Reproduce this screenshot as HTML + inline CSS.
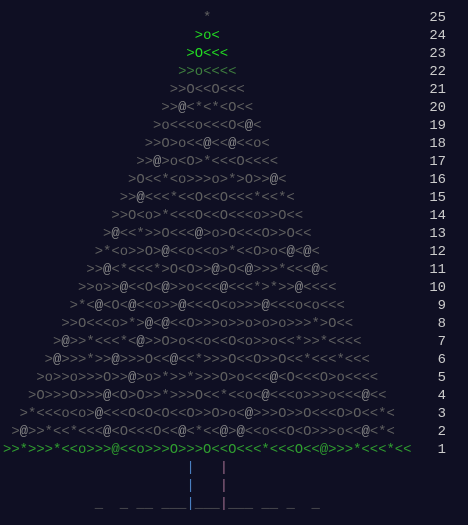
<!DOCTYPE html><html><head><style>
html,body{margin:0;padding:0;background:#0f0f23;width:468px;height:525px;overflow:hidden}
pre{position:absolute;left:3px;top:9px;margin:0;font-family:"Liberation Mono",monospace;font-size:13.9px;line-height:18px;color:#606060;white-space:pre}
.n{position:absolute;right:22px;top:9px;margin:0;font-family:"Liberation Mono",monospace;font-size:13.9px;line-height:18px;color:#cccccc;text-align:right;white-space:pre}
.g1{color:#22dd22}.g2{color:#3f7f3f}.g3{color:#30a030}.a{color:#8a8a8a}.b{color:#4a7fc0}.m{color:#9a6a8a}
</style></head><body>
<pre>                        *
                       <span class="g1">&gt;o&lt;</span>
                      <span class="g1">&gt;O&lt;&lt;&lt;</span>
                     <span class="g2">&gt;&gt;o&lt;&lt;&lt;&lt;</span>
                    &gt;&gt;O&lt;&lt;O&lt;&lt;&lt;
                   &gt;&gt;<span class="a">@</span>&lt;*&lt;*&lt;O&lt;&lt;
                  &gt;o&lt;&lt;&lt;o&lt;&lt;&lt;O&lt;<span class="a">@</span>&lt;
                 &gt;&gt;O&gt;o&lt;&lt;<span class="a">@</span>&lt;&lt;<span class="a">@</span>&lt;&lt;o&lt;
                &gt;&gt;<span class="a">@</span>&gt;o&lt;O&gt;*&lt;&lt;&lt;O&lt;&lt;&lt;&lt;
               &gt;O&lt;&lt;*&lt;o&gt;&gt;&gt;o&gt;*&gt;O&gt;&gt;<span class="a">@</span>&lt;
              &gt;&gt;<span class="a">@</span>&lt;&lt;&lt;*&lt;&lt;O&lt;&lt;O&lt;&lt;&lt;*&lt;&lt;*&lt;
             &gt;&gt;O&lt;o&gt;*&lt;&lt;&lt;O&lt;&lt;O&lt;&lt;&lt;o&gt;&gt;O&lt;&lt;
            &gt;<span class="a">@</span>&lt;&lt;*&gt;&gt;O&lt;&lt;&lt;<span class="a">@</span>&gt;o&gt;O&lt;&lt;&lt;O&gt;&gt;O&lt;&lt;
           &gt;*&lt;o&gt;&gt;O&gt;<span class="a">@</span>&lt;&lt;o&lt;&lt;o&gt;*&lt;&lt;O&gt;o&lt;<span class="a">@</span>&lt;<span class="a">@</span>&lt;
          &gt;&gt;<span class="a">@</span>&lt;*&lt;&lt;&lt;*&gt;O&lt;O&gt;&gt;<span class="a">@</span>&gt;O&lt;<span class="a">@</span>&gt;&gt;&gt;*&lt;&lt;&lt;<span class="a">@</span>&lt;
         &gt;&gt;o&gt;&gt;<span class="a">@</span>&lt;&lt;O&lt;<span class="a">@</span>&gt;&gt;o&lt;&lt;&lt;<span class="a">@</span>&lt;&lt;&lt;*&gt;*&gt;&gt;<span class="a">@</span>&lt;&lt;&lt;&lt;
        &gt;*&lt;<span class="a">@</span>&lt;O&lt;<span class="a">@</span>&lt;&lt;o&gt;&gt;<span class="a">@</span>&lt;&lt;&lt;O&lt;o&gt;&gt;&gt;<span class="a">@</span>&lt;&lt;&lt;o&lt;o&lt;&lt;&lt;
       &gt;&gt;O&lt;&lt;&lt;o&gt;*&gt;<span class="a">@</span>&lt;<span class="a">@</span>&lt;&lt;O&gt;&gt;&gt;o&gt;&gt;o&gt;o&gt;o&gt;&gt;&gt;*&gt;O&lt;&lt;
      &gt;<span class="a">@</span>&gt;&gt;*&lt;&lt;&lt;*&lt;<span class="a">@</span>&gt;&gt;O&gt;o&lt;&lt;o&lt;&lt;O&lt;o&gt;&gt;o&lt;&lt;*&gt;&gt;*&lt;&lt;&lt;&lt;
     &gt;<span class="a">@</span>&gt;&gt;&gt;*&gt;&gt;<span class="a">@</span>&gt;&gt;&gt;O&lt;&lt;<span class="a">@</span>&lt;&lt;*&gt;&gt;&gt;O&lt;&lt;O&gt;&gt;O&lt;&lt;*&lt;&lt;&lt;*&lt;&lt;&lt;
    &gt;o&gt;&gt;o&gt;&gt;&gt;O&gt;&gt;<span class="a">@</span>&gt;o&gt;*&gt;&gt;*&gt;&gt;&gt;O&gt;o&lt;&lt;&lt;<span class="a">@</span>&lt;O&lt;&lt;&lt;O&gt;o&lt;&lt;&lt;&lt;
   &gt;O&gt;&gt;&gt;O&gt;&gt;&gt;<span class="a">@</span>&lt;O&gt;O&gt;&gt;*&gt;&gt;&gt;O&lt;&lt;*&lt;&lt;o&lt;<span class="a">@</span>&lt;&lt;&lt;o&gt;&gt;&gt;o&lt;&lt;&lt;<span class="a">@</span>&lt;&lt;
  &gt;*&lt;&lt;&lt;o&lt;o&gt;<span class="a">@</span>&lt;&lt;&lt;O&lt;O&lt;O&lt;&lt;O&gt;&gt;O&gt;o&lt;<span class="a">@</span>&gt;&gt;&gt;O&gt;&gt;O&lt;&lt;&lt;O&gt;O&lt;&lt;*&lt;
 &gt;<span class="a">@</span>&gt;&gt;*&lt;&lt;*&lt;&lt;&lt;<span class="a">@</span>&lt;O&lt;&lt;&lt;O&lt;&lt;<span class="a">@</span>&lt;*&lt;&lt;<span class="a">@</span>&gt;<span class="a">@</span>&lt;&lt;o&lt;&lt;O&lt;O&gt;&gt;&gt;o&lt;&lt;<span class="a">@</span>&lt;*&lt;
<span class="g3">&gt;&gt;*&gt;&gt;&gt;*&lt;&lt;o&gt;&gt;&gt;@&lt;&lt;o&gt;&gt;&gt;O&gt;&gt;&gt;O&lt;&lt;O&lt;&lt;&lt;*&lt;&lt;&lt;O&lt;&lt;@&gt;&gt;&gt;*&lt;&lt;&lt;*&lt;&lt;</span>
                      <span class="b">|</span>   <span class="m">|</span>
                      <span class="b">|</span>   <span class="m">|</span>
           _  _ __ ___<span class="b">|</span>___<span class="m">|</span>___ __ _  _</pre>
<pre class="n">25
24
23
22
21
20
19
18
17
16
15
14
13
12
11
10
 9
 8
 7
 6
 5
 4
 3
 2
 1</pre>
</body></html>
